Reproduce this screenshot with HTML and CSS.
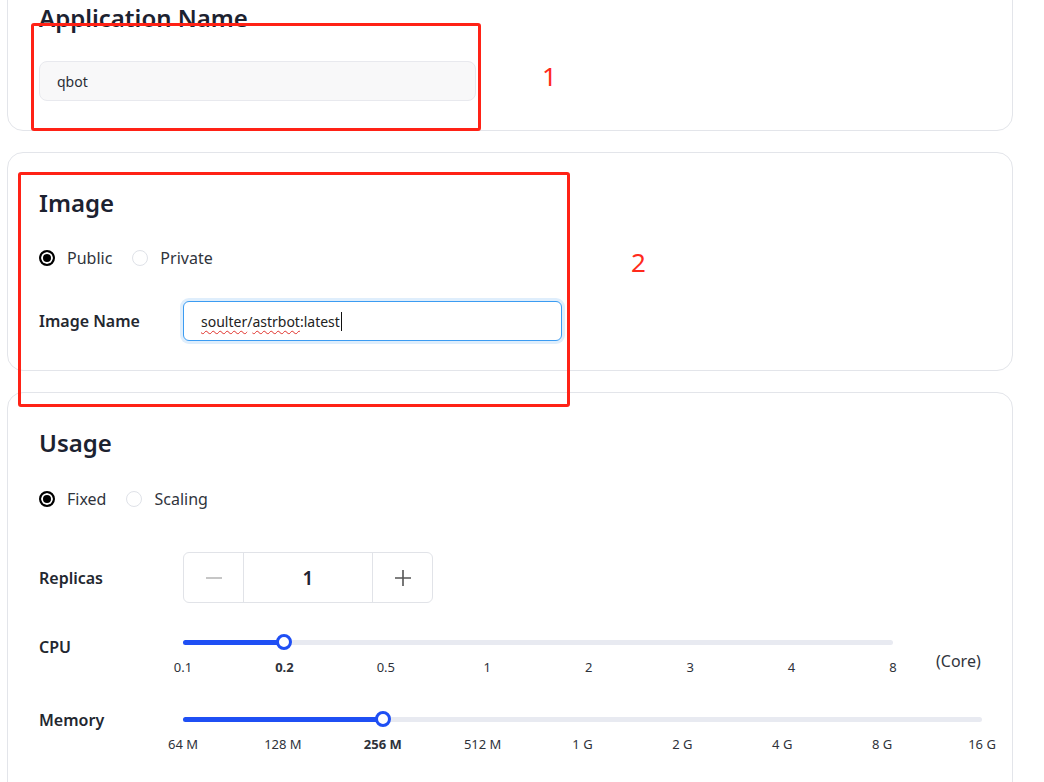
FILE: index.html
```html
<!DOCTYPE html>
<html lang="en">
<head>
<meta charset="utf-8">
<title>Application</title>
<link rel="stylesheet" href="styles.css">
</head>
<body>
<div class="page">
  <section class="card">
    <h2 class="card-title">Application Name</h2>
    <div class="text-field">qbot</div>
  </section>

  <section class="card">
    <h2 class="card-title">Image</h2>
    <div class="radio-group">
      <label class="radio"><span class="radio-dot checked"></span>Public</label>
      <label class="radio"><span class="radio-dot"></span>Private</label>
    </div>
    <div class="form-row">
      <span class="form-label">Image Name</span>
      <div class="text-field focused"><span class="misspelled">soulter</span>/<span class="misspelled">astrbot</span>:latest<span class="caret"></span></div>
    </div>
  </section>

  <section class="card card-last">
    <h2 class="card-title">Usage</h2>
    <div class="radio-group">
      <label class="radio"><span class="radio-dot checked"></span>Fixed</label>
      <label class="radio"><span class="radio-dot"></span>Scaling</label>
    </div>
    <div class="form-row replicas-row">
      <span class="form-label">Replicas</span>
      <div class="stepper">
        <span class="step-btn minus"><svg width="18" height="18" viewBox="0 0 18 18"><path d="M1 9h16" stroke="#c6c6c6" stroke-width="2"/></svg></span>
        <span class="step-value">1</span>
        <span class="step-btn"><svg width="18" height="18" viewBox="0 0 18 18"><path d="M1 9h16M9 1v16" stroke="#555" stroke-width="1.6"/></svg></span>
      </div>
    </div>
    <div class="slider-row cpu-row">
      <span class="form-label slider-label cpu-label">CPU</span>
      <div class="slider cpu-slider">
        <div class="track">
          <div class="track-bar"><div class="track-fill" style="width:14.2857%"></div></div>
          <span class="thumb" style="left:14.2857%"></span>
        </div>
        <div class="ticks ticks-8">
          <span>0.1</span><span class="active">0.2</span><span>0.5</span><span>1</span><span>2</span><span>3</span><span>4</span><span>8</span>
        </div>
      </div>
      <span class="unit">(Core)</span>
    </div>
    <div class="slider-row mem-row">
      <span class="form-label slider-label">Memory</span>
      <div class="slider mem-slider">
        <div class="track">
          <div class="track-bar"><div class="track-fill" style="width:25%"></div></div>
          <span class="thumb" style="left:25%"></span>
        </div>
        <div class="ticks ticks-9">
          <span>64 M</span><span>128 M</span><span class="active">256 M</span><span>512 M</span><span>1 G</span><span>2 G</span><span>4 G</span><span>8 G</span><span>16 G</span>
        </div>
      </div>
    </div>
  </section>
</div>

<div class="annot-box annot-box-1"></div>
<div class="annot-num annot-num-1">1</div>
<div class="annot-box annot-box-2"></div>
<div class="annot-num annot-num-2">2</div>
</body>
</html>
```

FILE: styles.css
```css
html, body {
  margin: 0;
  padding: 0;
  background: #ffffff;
}

body {
  font-family: "Noto Sans", "Open Sans", "Liberation Sans", sans-serif;
  color: #1f2430;
  overflow: hidden;
}

.page {
  padding: 0 30px 0 7px;
  margin-top: -33px;
}

.card {
  width: 1006px;
  box-sizing: border-box;
  border: 1px solid #e3e5ea;
  border-radius: 16px;
  padding: 32px 31px 29px;
  margin-bottom: 21px;
  background: #fff;
}

.card-last {
  padding-bottom: 60px;
}

.card-title {
  margin: 0;
  font-size: 24px;
  line-height: 36px;
  font-weight: 600;
  color: #1c2230;
}

.text-field {
  margin-top: 25px;
  width: 437px;
  height: 40px;
  box-sizing: border-box;
  border: 1px solid #e8e9ee;
  background: #f8f8f9;
  border-radius: 8px;
  padding: 0 17px;
  display: flex;
  align-items: center;
  font-size: 14px;
  color: #2a2e36;
}

.text-field.focused {
  margin-top: 0;
  width: 379px;
  background: #fff;
  border: 1px solid #3b9cf2;
  border-radius: 6px;
  box-shadow: 0 0 0 3px #dfeefc;
  color: #222;
}

.misspelled {
  text-decoration: underline wavy #e0302a;
  text-decoration-thickness: 1px;
  text-underline-offset: 3px;
}

.caret {
  display: inline-block;
  width: 1px;
  height: 19px;
  background: #111;
  margin-left: 1px;
}

.radio-group {
  display: flex;
  gap: 20px;
  margin-top: 25px;
}

.card-last .radio-group {
  margin-top: 26px;
}

.radio {
  display: flex;
  align-items: center;
  gap: 12px;
  font-size: 16px;
  line-height: 24px;
  color: #30343c;
}

.radio-dot {
  width: 16px;
  height: 16px;
  box-sizing: border-box;
  border-radius: 50%;
  border: 1px solid #dfe2e8;
  background: #fff;
}

.radio-dot.checked {
  border: 2px solid #000;
  background: #000;
  box-shadow: inset 0 0 0 2px #fff;
}

.form-row {
  display: grid;
  grid-template-columns: 144px auto;
  align-items: center;
  margin-top: 31px;
}

.form-label {
  font-size: 16px;
  font-weight: 600;
  color: #23272f;
}

.replicas-row {
  margin-top: 41px;
}

.stepper {
  display: flex;
  width: 250px;
  height: 51px;
  box-sizing: border-box;
  border: 1px solid #e1e3e8;
  border-radius: 6px;
}

.step-btn {
  width: 59px;
  display: flex;
  align-items: center;
  justify-content: center;
}

.step-value {
  flex: 1;
  display: flex;
  align-items: center;
  justify-content: center;
  border-left: 1px solid #e1e3e8;
  border-right: 1px solid #e1e3e8;
  font-size: 19px;
  font-weight: 600;
  color: #1f2430;
}

.slider-row {
  display: flex;
  align-items: flex-start;
}

.cpu-row {
  margin-top: 31px;
}

.mem-row {
  margin-top: 35px;
}

.slider-label {
  width: 144px;
  flex: none;
  line-height: 18px;
}

.cpu-label {
  padding-top: 4px;
}

.slider {
  position: relative;
  flex: none;
}

.cpu-slider {
  width: 710px;
}

.mem-slider {
  width: 799px;
}

.track {
  position: relative;
  height: 16px;
  display: flex;
  align-items: center;
}

.track-bar {
  width: 100%;
  height: 5px;
  border-radius: 3px;
  background: #e8eaf1;
}

.track-fill {
  height: 100%;
  border-radius: 3px;
  background: #1f4ff4;
}

.thumb {
  position: absolute;
  top: 50%;
  width: 16px;
  height: 16px;
  box-sizing: border-box;
  border: 3px solid #1f4ff4;
  border-radius: 50%;
  background: #fff;
  transform: translate(-50%, -50%);
}

.ticks {
  display: grid;
  margin-top: 8px;
  font-size: 13px;
  line-height: 18px;
  color: #2e323a;
  text-align: center;
}

.ticks-8 {
  grid-template-columns: repeat(8, 1fr);
  margin-left: calc(-100% / 14);
  margin-right: calc(-100% / 14);
}

.ticks-9 {
  grid-template-columns: repeat(9, 1fr);
  margin-left: calc(-100% / 16);
  margin-right: calc(-100% / 16);
}

.ticks .active {
  font-weight: 700;
}

.unit {
  margin-left: 43px;
  margin-top: 15px;
  font-size: 16px;
  line-height: 24px;
  color: #30343c;
}

.annot-box {
  position: absolute;
  border: 3px solid #ff2216;
  border-radius: 3px;
  box-sizing: border-box;
}

.annot-box-1 {
  left: 31px;
  top: 23px;
  width: 450px;
  height: 108px;
}

.annot-box-2 {
  left: 18px;
  top: 172px;
  width: 552px;
  height: 235px;
}

.annot-num {
  position: absolute;
  font-family: "Noto Sans", "Liberation Sans", sans-serif;
  font-size: 26px;
  line-height: 30px;
  color: #ff2a1c;
}

.annot-num-1 {
  left: 542px;
  top: 61px;
}

.annot-num-2 {
  left: 631px;
  top: 247px;
}
```
